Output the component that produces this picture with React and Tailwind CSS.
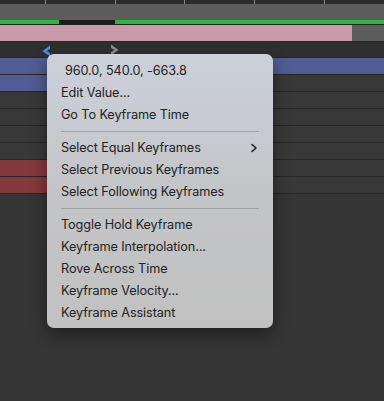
import React from 'react';

const font = { fontFamily: 'Inter, "Liberation Sans", sans-serif' };

const Row = ({ bar }) => (
  <div className="relative h-[17px] bg-[#383838] border-b border-[#262626]">
    {bar}
  </div>
);

const Item = ({ label, sub, indent }) => (
  <div className={`flex items-center justify-between h-[22px] pr-[14px] ${indent ? 'pl-[18px]' : 'pl-[14px]'}`}>
    <span>{label}</span>
    {sub && (
      <svg width="8" height="10" viewBox="0 0 8 10" className="mr-[1px]">
        <path d="M2 1.5 L6 5 L2 8.5" fill="none" stroke="#1e1e1e" strokeWidth="1.6" strokeLinecap="round" strokeLinejoin="round" />
      </svg>
    )}
  </div>
);

const Sep = () => (
  <div className="h-[11px] flex items-center px-[14px]">
    <div className="h-px w-full bg-[#a3a3a6]" />
  </div>
);

export default function App() {
  return (
    <div className="relative w-[384px] h-[401px] overflow-hidden bg-[#353535]" style={font}>
      {/* ruler */}
      <div className="relative h-[4px] bg-[#2b2b2b]">
        {[45, 115, 184, 254, 324].map((x) => (
          <div key={x} className="absolute top-0 w-px h-[4px] bg-[#8a8a8a]" style={{ left: x }} />
        ))}
      </div>
      <div className="h-[16px] bg-[#5d5d5d]" />
      {/* work area line */}
      <div className="flex h-[4px]">
        <div className="w-[59px] bg-[#2bb73a]" />
        <div className="w-[56px] bg-[#1c1c1c]" />
        <div className="flex-1 bg-[#2bb73a]" />
      </div>
      <div className="h-px bg-[#1e1e1e]" />
      {/* layer bar */}
      <div className="flex h-[16px] bg-[#5d5d5d]">
        <div className="w-[352px] bg-[#c99aa9]" />
      </div>
      <div className="h-px bg-[#262626]" />
      {/* keyframe row */}
      <div className="relative h-[16px] bg-[#2f2f2f] border-b border-[#262626]">
        <svg className="absolute left-[40px] top-[3px]" width="12" height="12" viewBox="0 0 12 12">
          <path d="M10 0.5 L2.5 6 L10 11.5 L10 8 L6.5 6 L10 4 Z" fill="#3f92f2" />
        </svg>
        <svg className="absolute left-[109px] top-[2px]" width="12" height="12" viewBox="0 0 12 12">
          <path d="M2 0.5 L9.5 6 L2 11.5 L2 8 L5.5 6 L2 4 Z" fill="#8e8e8e" />
        </svg>
      </div>
      <Row bar={<div className="absolute inset-0 bg-[#525c94]" />} />
      <Row bar={<div className="absolute left-0 top-0 bottom-0 w-[160px] bg-[#525c94]" />} />
      <Row />
      <Row />
      <Row />
      <Row />
      <Row bar={<div className="absolute left-0 top-0 bottom-0 w-[160px] bg-[#84393d]" />} />
      <Row bar={<div className="absolute left-0 top-0 bottom-0 w-[160px] bg-[#84393d]" />} />

      {/* context menu */}
      <div className="absolute left-[47px] top-[54px] w-[226px] rounded-[7px] bg-gradient-to-b from-[#ccd0da] via-[#c4c5c8] to-[#c1c1c1] pt-[6px] pb-[4px] text-[12.7px] tracking-[-0.1px] text-[#232323] shadow-[0_6px_16px_rgba(0,0,0,0.45)]">
        <Item label="960.0, 540.0, -663.8" indent />
        <Item label="Edit Value..." />
        <Item label="Go To Keyframe Time" />
        <Sep />
        <Item label="Select Equal Keyframes" sub />
        <Item label="Select Previous Keyframes" />
        <Item label="Select Following Keyframes" />
        <Sep />
        <Item label="Toggle Hold Keyframe" />
        <Item label="Keyframe Interpolation..." />
        <Item label="Rove Across Time" />
        <Item label="Keyframe Velocity..." />
        <Item label="Keyframe Assistant" />
      </div>
    </div>
  );
}
